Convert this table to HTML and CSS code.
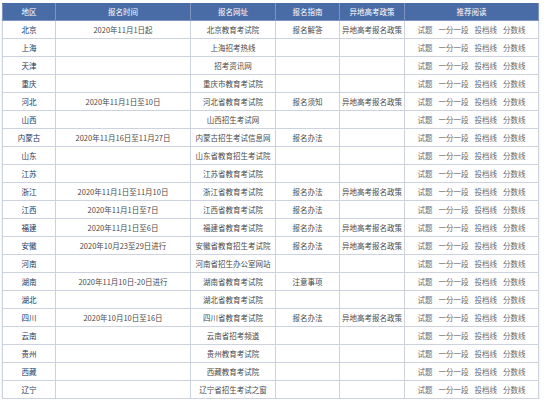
FILE: index.html
```html
<!DOCTYPE html>
<html lang="zh-CN">
<head>
<meta charset="utf-8">
<link rel="stylesheet" href="styles.css">
</head>
<body>
<table class="gk">
  <colgroup>
    <col class="c1"><col class="c2"><col class="c3"><col class="c4"><col class="c5"><col class="c6">
  </colgroup>
  <thead>
    <tr><th>地区</th><th>报名时间</th><th>报名网址</th><th>报名指南</th><th>异地高考政策</th><th>推荐阅读</th></tr>
  </thead>
  <tbody>
    <tr><td class="reg">北京</td><td>2020年11月1日起</td><td>北京教育考试院</td><td>报名解答</td><td>异地高考报名政策</td><td class="links"><span>试题</span><span>一分一段</span><span>投档线</span><span>分数线</span></td></tr>
    <tr><td class="reg">上海</td><td></td><td>上海招考热线</td><td></td><td></td><td class="links"><span>试题</span><span>一分一段</span><span>投档线</span><span>分数线</span></td></tr>
    <tr><td class="reg">天津</td><td></td><td>招考资讯网</td><td></td><td></td><td class="links"><span>试题</span><span>一分一段</span><span>投档线</span><span>分数线</span></td></tr>
    <tr><td class="reg">重庆</td><td></td><td>重庆市教育考试院</td><td></td><td></td><td class="links"><span>试题</span><span>一分一段</span><span>投档线</span><span>分数线</span></td></tr>
    <tr><td class="reg">河北</td><td>2020年11月1日至10日</td><td>河北省教育考试院</td><td>报名须知</td><td>异地高考报名政策</td><td class="links"><span>试题</span><span>一分一段</span><span>投档线</span><span>分数线</span></td></tr>
    <tr><td class="reg">山西</td><td></td><td>山西招生考试网</td><td></td><td></td><td class="links"><span>试题</span><span>一分一段</span><span>投档线</span><span>分数线</span></td></tr>
    <tr><td class="reg">内蒙古</td><td>2020年11月16日至11月27日</td><td>内蒙古招生考试信息网</td><td>报名办法</td><td></td><td class="links"><span>试题</span><span>一分一段</span><span>投档线</span><span>分数线</span></td></tr>
    <tr><td class="reg">山东</td><td></td><td>山东省教育招生考试院</td><td></td><td></td><td class="links"><span>试题</span><span>一分一段</span><span>投档线</span><span>分数线</span></td></tr>
    <tr><td class="reg">江苏</td><td></td><td>江苏省教育考试院</td><td></td><td></td><td class="links"><span>试题</span><span>一分一段</span><span>投档线</span><span>分数线</span></td></tr>
    <tr><td class="reg">浙江</td><td>2020年11月1日至11月10日</td><td>浙江省教育考试院</td><td>报名办法</td><td>异地高考报名政策</td><td class="links"><span>试题</span><span>一分一段</span><span>投档线</span><span>分数线</span></td></tr>
    <tr><td class="reg">江西</td><td>2020年11月1日至7日</td><td>江西省教育考试院</td><td>报名办法</td><td></td><td class="links"><span>试题</span><span>一分一段</span><span>投档线</span><span>分数线</span></td></tr>
    <tr><td class="reg">福建</td><td>2020年11月1日至6日</td><td>福建省教育考试院</td><td>报名办法</td><td>异地高考报名政策</td><td class="links"><span>试题</span><span>一分一段</span><span>投档线</span><span>分数线</span></td></tr>
    <tr><td class="reg">安徽</td><td>2020年10月23至29日进行</td><td>安徽省教育招生考试院</td><td>报名办法</td><td>异地高考报名政策</td><td class="links"><span>试题</span><span>一分一段</span><span>投档线</span><span>分数线</span></td></tr>
    <tr><td class="reg">河南</td><td></td><td>河南省招生办公室网站</td><td></td><td></td><td class="links"><span>试题</span><span>一分一段</span><span>投档线</span><span>分数线</span></td></tr>
    <tr><td class="reg">湖南</td><td>2020年11月10日-20日进行</td><td>湖南省教育考试院</td><td>注意事项</td><td></td><td class="links"><span>试题</span><span>一分一段</span><span>投档线</span><span>分数线</span></td></tr>
    <tr><td class="reg">湖北</td><td></td><td>湖北省教育考试院</td><td></td><td></td><td class="links"><span>试题</span><span>一分一段</span><span>投档线</span><span>分数线</span></td></tr>
    <tr><td class="reg">四川</td><td>2020年10月10日至16日</td><td>四川省教育考试院</td><td>报名办法</td><td>异地高考报名政策</td><td class="links"><span>试题</span><span>一分一段</span><span>投档线</span><span>分数线</span></td></tr>
    <tr><td class="reg">云南</td><td></td><td>云南省招考频道</td><td></td><td></td><td class="links"><span>试题</span><span>一分一段</span><span>投档线</span><span>分数线</span></td></tr>
    <tr><td class="reg">贵州</td><td></td><td>贵州教育考试院</td><td></td><td></td><td class="links"><span>试题</span><span>一分一段</span><span>投档线</span><span>分数线</span></td></tr>
    <tr><td class="reg">西藏</td><td></td><td>西藏教育考试院</td><td></td><td></td><td class="links"><span>试题</span><span>一分一段</span><span>投档线</span><span>分数线</span></td></tr>
    <tr><td class="reg">辽宁</td><td></td><td>辽宁省招生考试之窗</td><td></td><td></td><td class="links"><span>试题</span><span>一分一段</span><span>投档线</span><span>分数线</span></td></tr>
  </tbody>
</table>
</body>
</html>
```

FILE: styles.css
```css
html, body {
  margin: 0;
  padding: 0;
  background: #ffffff;
}
body {
  padding: 3px 0 0 2px;
  font-family: "Noto Sans CJK SC", "Noto Sans", sans-serif;
}
.gk {
  border-collapse: collapse;
  table-layout: fixed;
  width: 536px;
  font-size: 7.5px;
  color: #4a4a4a;
  box-shadow: 0 2px 2px rgba(120, 130, 150, 0.25);
}
.c1 { width: 53px; }
.c2 { width: 135px; }
.c3 { width: 85px; }
.c4 { width: 64px; }
.c5 { width: 65px; }
.c6 { width: 134px; }
.gk th {
  height: 16px;
  padding: 0;
  background: #4a6ca6;
  color: #ffffff;
  font-weight: normal;
  text-align: center;
  border: 1px solid #7d95c0;
  border-top-color: #4a6ca6;
  white-space: nowrap;
  line-height: 1;
}
.gk td {
  height: 17px;
  padding: 0;
  text-align: center;
  vertical-align: middle;
  border: 1px solid #cdd3de;
  white-space: nowrap;
  line-height: 1;
}
.gk td.reg {
  color: #24365a;
}
.gk td.links {
  color: #6a6a6a;
}
.links span + span {
  margin-left: 6px;
}
```
